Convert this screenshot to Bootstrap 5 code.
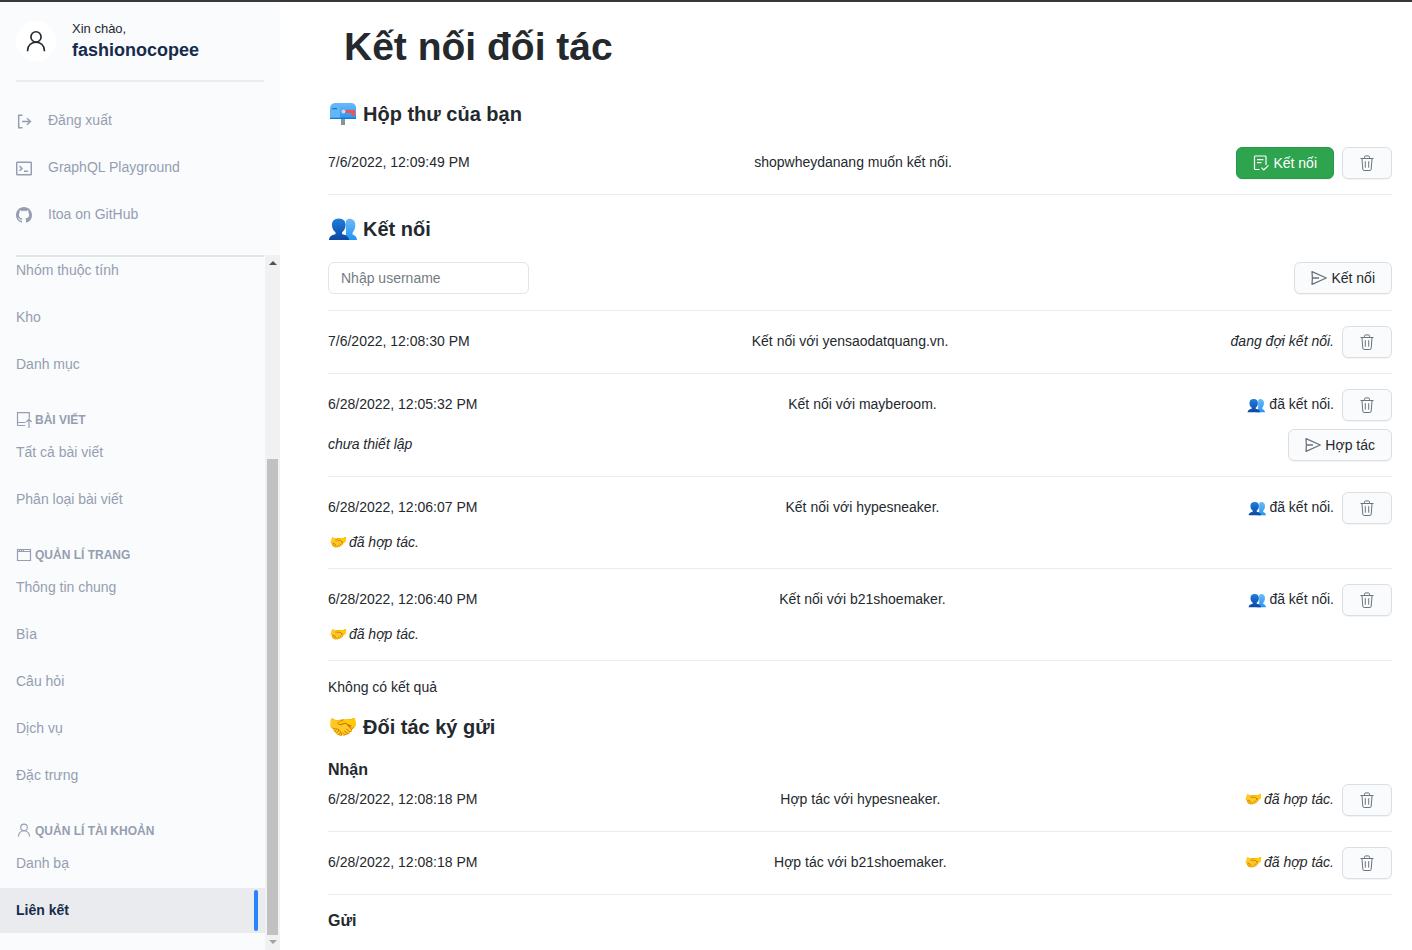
<!DOCTYPE html>
<html lang="vi">
<head>
<meta charset="utf-8">
<meta name="viewport" content="width=device-width, initial-scale=1">
<title>Kết nối đối tác</title>
<link href="https://cdn.jsdelivr.net/npm/bootstrap@5.3.0/dist/css/bootstrap.min.css" rel="stylesheet">
<style>
body{font-family:"Liberation Sans",Arial,sans-serif;font-size:14px;line-height:21px;color:#24292e;border-top:2px solid #38383a;min-height:100vh}
.ic{width:16px;height:16px;fill:none;stroke:currentColor;flex:none}
.side{width:280px;height:calc(100vh - 2px);background:#fafbfd;color:#959eb0}
.side-top{height:253px;padding:0 16px;flex:none}
.hello{padding:18px 0 18px;border-bottom:2px solid #eaecee;gap:16px}
.avatar{width:40px;height:40px;background:#fff;color:#24292e}
.avatar .ic{width:22px;height:22px}
.avatar .ic,.group .ic{stroke-width:1.2}
.greet{font-size:13px;line-height:18px;color:#24292e}
.shop{font-size:18px;line-height:24px;color:#172b4d}
.tools{padding-top:15px}
.side a{color:inherit;text-decoration:none}
.tools a{height:47px;gap:16px}
.menu{border-top:2px solid #e1e4e8;margin:0 1px 0 16px}
.links{padding-bottom:17px}
.links a{display:flex;align-items:center;flex:none;height:45px;padding:0 16px;margin-top:2px}
.links a.current{background:#eaebef;color:#172b4d;font-weight:700;padding-right:7px;justify-content:space-between}
.current::after{content:"";width:4px;height:41px;border-radius:2px;background:#2684ff}
.group{font-size:12px;line-height:16px;font-weight:700;padding:25px 16px 0;gap:3px}
.track{width:15px;background:#f1f1f1;padding:0 2px}
.up,.down{width:0;height:0;border:4px solid transparent;border-top-width:0;border-bottom:4px solid #505050;margin:6px auto 0}
.down{border-top:4px solid #a3a3a3;border-bottom-width:0;margin:5px auto 6px}
.thumb{height:476px;background:#c1c1c1;margin-top:auto}
.page{padding:21px 20px 0 48px}
h1{font-size:39px;line-height:48px;font-weight:700;padding-left:16px;margin:0 0 31px}
h2{font-size:20px;line-height:24px;font-weight:700;margin:0 0 21px;gap:6px}
h3{font-size:16px;line-height:20px;font-weight:700;margin:0}
.big-emo{width:29px;height:24px;flex:none;font-size:24px}
.emo{width:18px;height:15px;vertical-align:-4px}
section+section{padding-top:22px}
section.partners{padding-top:17px}
.entry{border-bottom:1px solid #e9ebed;padding:15px 0}
.flush{padding-top:0}
.line{min-height:32px}
.line>span{padding-top:5px}
.line+.line,.note{margin:8px 0 0}
.btn{--bs-btn-font-size:14px;--bs-btn-line-height:20px;--bs-btn-padding-y:5px;--bs-btn-padding-x:16px;--bs-btn-border-radius:6px;display:inline-flex;align-items:center;justify-content:center;gap:4px;height:32px;box-shadow:0 1px 0 rgba(27,31,35,.05)}
.btn-plain{--bs-btn-bg:#fafbfc;--bs-btn-border-color:#dcdee1;--bs-btn-color:#24292e;--bs-btn-hover-bg:#f3f4f6;--bs-btn-hover-border-color:#d0d3d7}
.btn-plain .ic{color:#6a737d}
.btn-del{width:50px}
.btn-go{--bs-btn-bg:#2ea44f;--bs-btn-border-color:#2a9749;--bs-btn-color:#fff;--bs-btn-hover-bg:#2c974b;--bs-btn-hover-color:#fff}
.form-control{width:201px;height:32px;font-size:14px;line-height:20px;padding:5px 12px;border-color:#e1e4e8;border-radius:6px}
.form-control::placeholder{color:#757b83}
</style>
</head>
<body>
<svg width="0" height="0" class="position-absolute" aria-hidden="true">
 <defs>
  <linearGradient id="blue" x2="0" y2="1"><stop stop-color="#6db9f8"/><stop offset="1" stop-color="#2196f3"/></linearGradient>
  <linearGradient id="navy" x2="0" y2="1"><stop stop-color="#1e7fdc"/><stop offset="1" stop-color="#0d47a1"/></linearGradient>
  <symbol id="trash" viewBox="0 0 16 16"><path d="M1.500 3.500h13M5.500 3.300V2.200c0-.9.4-1.300 1.200-1.300h2.600c.8 0 1.200.4 1.200 1.300v1.100M3 4l.8 10.200c.1.800.500 1.300 1.300 1.300h5.800c.8 0 1.200-.500 1.300-1.300L13 4M6.300 6.200v6.500M9.700 6.200v6.500"/></symbol>
  <symbol id="send" viewBox="0 0 16 16"><path stroke-width="1.300" stroke-linejoin="round" d="M1 1.700 15.300 8 1 14.300 1.400 8zM1.400 8H8"/></symbol>
  <symbol id="person" viewBox="0 0 16 16"><circle cx="8" cy="5" r="3.700"/><path d="M1.900 15.500v-.8C1.900 11.500 4.500 8.800 8 8.800s6.100 2.700 6.100 5.900v.8"/></symbol>
  <symbol id="people" viewBox="0 0 29 24"><path fill="url(#blue)" d="M14 23c0-3 2-4.500 4-5.500V4c1-2 3-2.500 4-2.300 4 .3 5.700 3.300 5.300 7.300-.3 3-1.300 5-2.700 6.500v2c2.400.7 4.400 2.500 4.400 5.500z"/><path fill="url(#navy)" d="M1 23c0-3.300 2.600-5 6.500-5.800v-2C5.500 14 4.300 11.500 4 9c-.4-4.600 2-7.500 6.800-7.500S18 4.400 17.600 9c-.3 2.500-1.500 5-3.500 6.200v2c4 .8 7 2.500 7 5.800z"/></symbol>
  <symbol id="mailbox" viewBox="0 0 29 24"><path fill="#8d9499" d="M13 17h4v6h-4z"/><path fill="#64b5f6" d="M2 17V7c0-4 2-6 6-6h14c4 0 6 2 6 6v10z"/><path fill="url(#blue)" d="M9 1h13c4 0 6 2 6 6v10H12V7c0-3-1-5-3-6z"/><path fill="#1976d2" d="M4 6.500C4.200 6 5 6 6 6h3v1.300H4zM2 15.800h26V17H2z"/><path fill="#ef5350" d="M16 8h11v6h-3.500v-3H16z"/><circle cx="15.500" cy="9.500" r="2" fill="#cfd8dc"/></symbol>
 </defs>
</svg>
<div class="d-flex">
 <aside class="side d-flex flex-column flex-shrink-0 sticky-top">
  <div class="side-top">
   <div class="hello d-flex align-items-center">
    <span class="avatar rounded-circle d-flex align-items-center justify-content-center"><svg class="ic"><use href="#person"/></svg></span>
    <div><div class="greet">Xin chào,</div><div class="shop fw-bold">fashionocopee</div></div>
   </div>
   <nav class="tools" aria-label="Tài khoản">
    <a href="#" class="d-flex align-items-center"><svg class="ic" viewBox="0 0 16 16" stroke-width="1.500"><path d="M6.500 2.200H2.700v12.600h3.800M6 8.500h8.500M11 5.300l3.400 3.200-3.400 3.200"/></svg>Đăng xuất</a>
    <a href="#" class="d-flex align-items-center"><svg class="ic" viewBox="0 0 16 16" stroke-width="1.500"><rect x=".7" y="2.200" width="14.600" height="12.600" rx=".8"/><path d="M3.500 6 6 8.400 3.500 10.800M8 11.300h4"/></svg>GraphQL Playground</a>
    <a href="#" class="d-flex align-items-center"><svg class="ic" viewBox="0 0 16 16"><path fill="currentColor" stroke="none" d="M8 0C3.580 0 0 3.580 0 8c0 3.540 2.290 6.530 5.470 7.590.4.070.55-.17.55-.38 0-.19-.01-.82-.01-1.490-2.010.37-2.530-.49-2.690-.94-.09-.23-.48-.94-.82-1.130-.28-.15-.68-.52-.01-.53.63-.01 1.080.58 1.230.82.72 1.210 1.870.87 2.330.66.07-.52.28-.87.51-1.070-1.780-.2-3.640-.89-3.640-3.950 0-.87.31-1.590.82-2.150-.08-.2-.36-1.020.08-2.120 0 0 .67-.21 2.200.82.64-.18 1.320-.27 2-.27s1.360.09 2 .27c1.530-1.040 2.200-.82 2.200-.82.44 1.100.16 1.920.08 2.120.51.56.82 1.270.82 2.150 0 3.070-1.870 3.750-3.650 3.950.29.25.54.73.54 1.480 0 1.070-.01 1.930-.01 2.200 0 .21.15.46.55.38A8.010 8.010 0 0 0 16 8c0-4.420-3.580-8-8-8"/></svg>Itoa on GitHub</a>
   </nav>
  </div>
  <div class="d-flex flex-fill overflow-hidden">
   <div class="d-flex flex-column flex-fill">
    <div class="menu"></div>
    <nav class="links d-flex flex-column justify-content-end flex-fill overflow-hidden" aria-label="Quản lí">
     <a href="#">Nhóm thuộc tính</a>
     <a href="#">Kho</a>
     <a href="#">Danh mục</a>
     <div class="group d-flex align-items-center"><svg class="ic" viewBox="0 0 16 16"><path d="M9 13.500H2.500a1 1 0 0 1-1-1V.6h11.800v6M1.500 10.500h8M13 16V7.500M10.300 10 13 7.300l2.700 2.700"/></svg>BÀI VIẾT</div>
     <a href="#">Tất cả bài viết</a>
     <a href="#">Phân loại bài viết</a>
     <div class="group d-flex align-items-center"><svg class="ic" viewBox="0 0 16 16"><path d="M1.500 2.500h13v11h-13zM1.500 4.500h13M3.500 2.500v2M5.500 2.500v2M7.500 2.500v2"/></svg>QUẢN LÍ TRANG</div>
     <a href="#">Thông tin chung</a>
     <a href="#">Bìa</a>
     <a href="#">Câu hỏi</a>
     <a href="#">Dịch vụ</a>
     <a href="#">Đặc trưng</a>
     <div class="group d-flex align-items-center"><svg class="ic" viewBox="0 0 16 18"><use href="#person" width="16" height="16"/></svg>QUẢN LÍ TÀI KHOẢN</div>
     <a href="#">Danh bạ</a>
     <a href="#" class="current" aria-current="page">Liên kết</a>
    </nav>
   </div>
   <div class="track d-flex flex-column flex-shrink-0" aria-hidden="true"><i class="up"></i><i class="thumb"></i><i class="down"></i></div>
  </div>
 </aside>

 <main class="page flex-fill">
  <h1>Kết nối đối tác</h1>

  <section>
   <h2 class="d-flex"><svg class="big-emo" aria-hidden="true"><use href="#mailbox"/></svg>Hộp thư của bạn</h2>
   <div class="entry flush">
    <div class="line d-flex justify-content-between"><span>7/6/2022, 12:09:49 PM</span><span>shopwheydanang muốn kết nối.</span>
     <div class="d-flex gap-2"><button class="btn btn-go" type="button"><svg class="ic" viewBox="0 0 16 16" stroke-width="1.200"><path d="M6.500 14.500H2.300a.8.8 0 0 1-.8-.8V1.800a.8.8 0 0 1 .8-.8h9.900a.8.8 0 0 1 .8.8V10M4 4.700h6.500M4 7.700h4.500M8.500 12.700l2.300 2.300 4.700-4.700"/></svg>Kết nối</button><button class="btn btn-plain btn-del" type="button" aria-label="Xóa"><svg class="ic"><use href="#trash"/></svg></button></div></div>
   </div>
  </section>

  <section>
   <h2 class="d-flex"><svg class="big-emo" aria-hidden="true"><use href="#people"/></svg>Kết nối</h2>
   <form class="entry flush pb-3 d-flex justify-content-between">
    <input class="form-control" type="text" placeholder="Nhập username" aria-label="Nhập username">
    <button class="btn btn-plain" type="button"><svg class="ic"><use href="#send"/></svg>Kết nối</button>
   </form>
   <div class="entry">
    <div class="line d-flex justify-content-between"><span>7/6/2022, 12:08:30 PM</span><span>Kết nối với yensaodatquang.vn.</span>
     <div class="line d-flex gap-2"><span class="fst-italic">đang đợi kết nối.</span><button class="btn btn-plain btn-del" type="button" aria-label="Xóa"><svg class="ic"><use href="#trash"/></svg></button></div></div>
   </div>
   <div class="entry">
    <div class="line d-flex justify-content-between"><span>6/28/2022, 12:05:32 PM</span><span>Kết nối với mayberoom.</span>
     <div class="line d-flex gap-2"><span><svg class="emo" aria-hidden="true"><use href="#people"/></svg> đã kết nối.</span><button class="btn btn-plain btn-del" type="button" aria-label="Xóa"><svg class="ic"><use href="#trash"/></svg></button></div></div>
    <div class="line d-flex justify-content-between"><span class="fst-italic">chưa thiết lập</span><button class="btn btn-plain" type="button"><svg class="ic"><use href="#send"/></svg>Hợp tác</button></div>
   </div>
   <div class="entry">
    <div class="line d-flex justify-content-between"><span>6/28/2022, 12:06:07 PM</span><span>Kết nối với hypesneaker.</span>
     <div class="line d-flex gap-2"><span><svg class="emo" aria-hidden="true"><use href="#people"/></svg> đã kết nối.</span><button class="btn btn-plain btn-del" type="button" aria-label="Xóa"><svg class="ic"><use href="#trash"/></svg></button></div></div>
    <p class="note fst-italic">🤝 đã hợp tác.</p>
   </div>
   <div class="entry">
    <div class="line d-flex justify-content-between"><span>6/28/2022, 12:06:40 PM</span><span>Kết nối với b21shoemaker.</span>
     <div class="line d-flex gap-2"><span><svg class="emo" aria-hidden="true"><use href="#people"/></svg> đã kết nối.</span><button class="btn btn-plain btn-del" type="button" aria-label="Xóa"><svg class="ic"><use href="#trash"/></svg></button></div></div>
    <p class="note fst-italic">🤝 đã hợp tác.</p>
   </div>
   <div class="pt-3">Không có kết quả</div>
  </section>

  <section class="partners">
   <h2 class="d-flex"><span class="big-emo">🤝</span>Đối tác ký gửi</h2>
   <h3>Nhận</h3>
   <div class="entry pt-1">
    <div class="line d-flex justify-content-between"><span>6/28/2022, 12:08:18 PM</span><span>Hợp tác với hypesneaker.</span>
     <div class="line d-flex gap-2"><span class="fst-italic">🤝 đã hợp tác.</span><button class="btn btn-plain btn-del" type="button" aria-label="Xóa"><svg class="ic"><use href="#trash"/></svg></button></div></div>
   </div>
   <div class="entry">
    <div class="line d-flex justify-content-between"><span>6/28/2022, 12:08:18 PM</span><span>Hợp tác với b21shoemaker.</span>
     <div class="line d-flex gap-2"><span class="fst-italic">🤝 đã hợp tác.</span><button class="btn btn-plain btn-del" type="button" aria-label="Xóa"><svg class="ic"><use href="#trash"/></svg></button></div></div>
   </div>
   <h3 class="pt-3">Gửi</h3>
  </section>
 </main>
</div>
<script src="https://cdn.jsdelivr.net/npm/bootstrap@5.3.0/dist/js/bootstrap.bundle.min.js"></script>
</body>
</html>
